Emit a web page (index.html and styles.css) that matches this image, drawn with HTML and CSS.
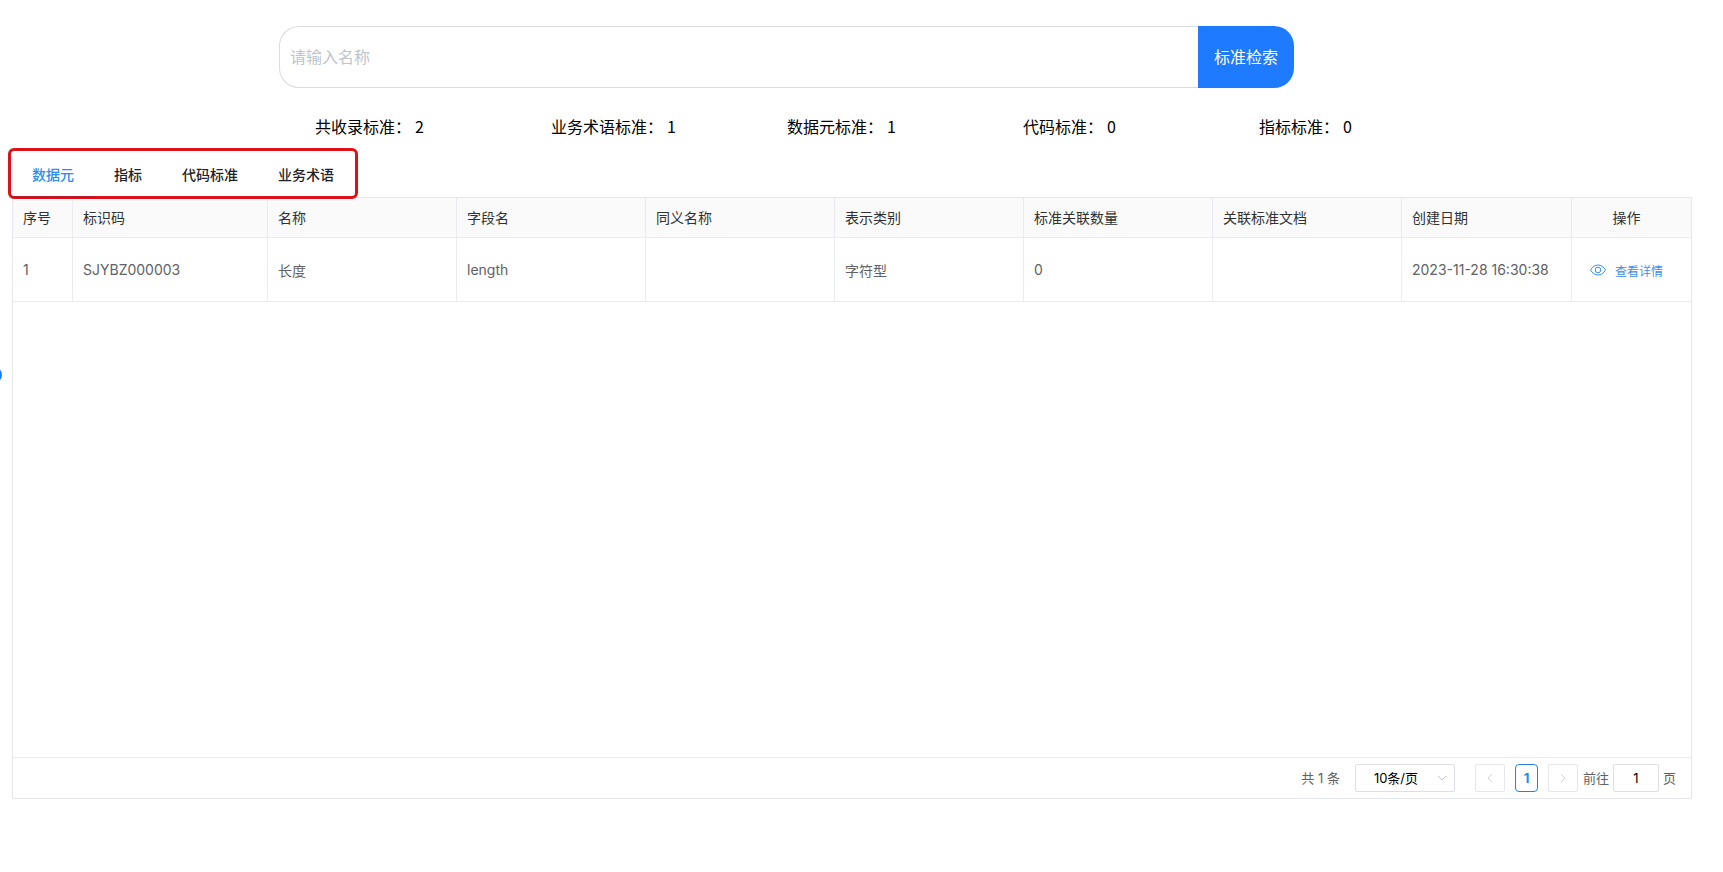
FILE: index.html
```html
<!DOCTYPE html>
<html lang="zh-CN">
<head>
<meta charset="utf-8">
<meta name="viewport" content="width=device-width, initial-scale=1">
<title>标准检索</title>
<link rel="stylesheet" href="styles.css">
</head>
<body>
<button class="drawer-handle" type="button" aria-label="展开侧栏"></button>
<main class="page">
  <div class="search-row">
    <form class="search">
      <input class="search-input" type="text" placeholder="请输入名称" aria-label="名称">
      <button class="search-button" type="button">标准检索</button>
    </form>
  </div>
  <div class="stats-row">
    <ul class="stats">
      <li class="stat"><span>共收录标准：</span><span>2</span></li>
      <li class="stat"><span>业务术语标准：</span><span>1</span></li>
      <li class="stat"><span>数据元标准：</span><span>1</span></li>
      <li class="stat"><span>代码标准：</span><span>0</span></li>
      <li class="stat"><span>指标标准：</span><span>0</span></li>
    </ul>
  </div>
  <div class="tabs" role="tablist">
    <button class="tab tab-active" type="button" role="tab" aria-selected="true">数据元</button>
    <button class="tab" type="button" role="tab" aria-selected="false">指标</button>
    <button class="tab" type="button" role="tab" aria-selected="false">代码标准</button>
    <button class="tab" type="button" role="tab" aria-selected="false">业务术语</button>
  </div>
  <section class="panel">
    <div class="table-area">
      <table class="table">
        <colgroup>
          <col class="col-index"><col class="col-code"><col><col><col><col><col><col><col class="col-date"><col class="col-action">
        </colgroup>
        <thead>
          <tr><th>序号</th><th>标识码</th><th>名称</th><th>字段名</th><th>同义名称</th><th>表示类别</th><th>标准关联数量</th><th>关联标准文档</th><th>创建日期</th><th class="action-head">操作</th></tr>
        </thead>
        <tbody>
          <tr>
            <td>1</td><td>SJYBZ000003</td><td>长度</td><td>length</td><td></td><td>字符型</td><td>0</td><td></td><td>2023-11-28 16:30:38</td>
            <td class="action-cell">
              <a class="detail-link" href="#">
                <svg class="eye" viewBox="0 0 16 16" aria-hidden="true"><path d="M.5 8C2.500 4.700 5 3 8 3S13.500 4.700 15.500 8C13.500 11.300 11 13 8 13S2.500 11.300 .5 8Z"/><circle cx="8" cy="8" r="2.800"/></svg>
                <span>查看详情</span>
              </a>
            </td>
          </tr>
        </tbody>
      </table>
    </div>
    <nav class="pagination" aria-label="分页">
      <span class="page-text">共 1 条</span>
      <span class="size-box">
        <select class="size-select" aria-label="每页条数"><option>10条/页</option></select>
        <svg class="size-arrow" viewBox="0 0 10 10" aria-hidden="true"><path d="M1 3l4 4 4-4"/></svg>
      </span>
      <button class="pager" type="button" aria-label="上一页" disabled><svg class="pager-icon" viewBox="0 0 10 10" aria-hidden="true"><path d="M7 1L3 5l4 4"/></svg></button>
      <button class="page-number" type="button" aria-current="page">1</button>
      <button class="pager" type="button" aria-label="下一页" disabled><svg class="pager-icon" viewBox="0 0 10 10" aria-hidden="true"><path d="M3 1l4 4-4 4"/></svg></button>
      <label class="jump"><span class="page-text">前往</span><input class="jump-input" type="text" value="1"><span class="page-text">页</span></label>
    </nav>
  </section>
</main>
</body>
</html>
```
FILE: styles.css
```css
* {
  box-sizing: border-box;
}

body {
  margin: 0;
  background: #fff;
  color: #000;
  font-family: Inter, "Noto Sans CJK SC", sans-serif;
  font-size: 14px;
}

button,
input,
select {
  margin: 0;
  padding: 0;
  font: inherit;
}

.page {
  display: flex;
  flex-direction: column;
  min-height: 100vh;
  padding: 26px 31px 73px 12px;
}

.drawer-handle {
  position: fixed;
  top: 43%;
  left: -14px;
  width: 16px;
  height: 16px;
  margin-top: -8px;
  border: 0;
  border-radius: 50%;
  background: #1c7cff;
}

/* Search */
.search-row {
  display: grid;
  grid-template-columns: 267fr 1015fr 398fr;
}

.search {
  grid-column: 2;
  display: flex;
  height: 62px;
  font-size: 16px;
}

.search-input {
  flex: 1;
  min-width: 0;
  padding: 0 10px;
  border: 1px solid #d9dce0;
  border-right: 0;
  border-radius: 20px 0 0 20px;
  outline: 0;
}

.search-input::placeholder {
  color: #c0c4cc;
}

.search-button {
  width: 96px;
  padding-bottom: 2px;
  border: 0;
  border-radius: 0 20px 20px 0;
  background: #1e7bff;
  color: #fff;
}

/* Totals */
.stats-row {
  display: grid;
  grid-template-columns: 303fr 1180fr 197fr;
  padding: 26px 0 10px;
}

.stats {
  grid-column: 2;
  display: grid;
  grid-template-columns: repeat(5, 1fr);
  margin: 0;
  padding: 0;
  list-style: none;
  font-family: "Noto Sans CJK SC", sans-serif;
  font-size: 16px;
  line-height: 24px;
}

.stat {
  display: flex;
  gap: 4px;
  white-space: nowrap;
}

/* Tabs */
.tabs {
  position: relative;
  display: flex;
  align-self: flex-start;
  height: 49px;
}

.tabs::after {
  content: "";
  position: absolute;
  inset: 0 -4px -2px;
  border: 3px solid #dc1218;
  border-radius: 6px;
  pointer-events: none;
}

.tabs::before {
  content: "";
  position: absolute;
  bottom: -1px;
  left: 0;
  z-index: 1;
  width: 82px;
  height: 2px;
  background: #b8172a;
}

.tab {
  padding: 2px 20px 0;
  border: 0;
  background: none;
  color: #1f2329;
  font-weight: 500;
}

.tab-active {
  color: #2a8cf5;
}

/* Table */
.panel {
  flex: 1;
  display: flex;
  flex-direction: column;
  border: 1px solid #e4e7ec;
}

.table-area {
  flex: 1;
}

.table {
  width: 100%;
  table-layout: fixed;
  border-collapse: separate;
  border-spacing: 0;
}

.col-index {
  width: 60px;
}

.col-code {
  width: 195px;
}

.col-date {
  width: 170px;
}

.col-action {
  width: 119px;
}

.table th,
.table td {
  padding: 0 10px;
  border-right: 1px solid #e9ecf1;
  border-bottom: 1px solid #e9ecf1;
  text-align: left;
  white-space: nowrap;
}

.table th:last-child,
.table td:last-child {
  border-right: 0;
}

.table th {
  height: 40px;
  padding-bottom: 2px;
  background: #fafafa;
  color: #303133;
  font-weight: 400;
}

.table td {
  height: 64px;
  color: #606266;
}

.table .action-head {
  padding-right: 20px;
  text-align: center;
}

.table .action-cell {
  padding: 0 18px;
}

.detail-link {
  display: flex;
  align-items: center;
  gap: 9px;
  color: #3a8ff0;
  font-size: 12px;
  text-decoration: none;
}

.detail-link span {
  padding-top: 2px;
}

.eye {
  width: 16px;
  height: 16px;
  fill: none;
  stroke: currentColor;
}

/* Pagination */
.pagination {
  display: flex;
  align-items: center;
  justify-content: flex-end;
  height: 41px;
  padding-right: 15px;
  border-top: 1px solid #e9ecf1;
  color: #606266;
  font-size: 13px;
}

.page-text {
  padding-bottom: 2px;
}

.size-box {
  position: relative;
  margin: 0 20px 0 15px;
}

.size-select {
  display: block;
  width: 100px;
  height: 28px;
  padding-right: 18px;
  border: 1px solid #dcdfe6;
  border-radius: 2px;
  appearance: none;
  background: #fff;
  color: #000;
  text-align: center;
  text-align-last: center;
}

.size-arrow {
  position: absolute;
  top: 9px;
  right: 8px;
  width: 10px;
  height: 10px;
  fill: none;
  stroke: #c0c4cc;
  pointer-events: none;
}

.pager {
  display: flex;
  align-items: center;
  justify-content: center;
  width: 30px;
  height: 28px;
  border: 1px solid #e4e7ed;
  border-radius: 2px;
  background: #fff;
}

.pager-icon {
  width: 10px;
  height: 10px;
  fill: none;
  stroke: #d0d3d9;
}

.page-number {
  width: 23px;
  height: 28px;
  margin: 0 10px;
  border: 1px solid #2a7fe0;
  border-radius: 4px;
  background: #fff;
  color: #2a86f0;
  font-weight: 700;
}

.jump {
  display: flex;
  align-items: center;
  gap: 4px;
  margin-left: 5px;
}

.jump-input {
  width: 46px;
  height: 28px;
  border: 1px solid #dcdfe6;
  border-radius: 2px;
  color: #000;
  text-align: center;
}
```
